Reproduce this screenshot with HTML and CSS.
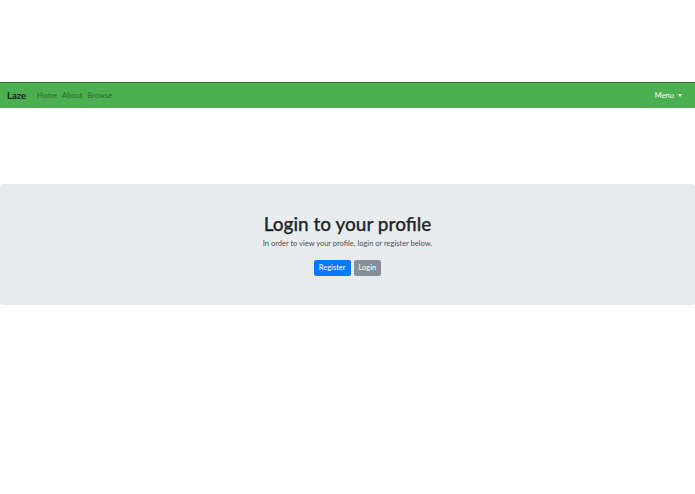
FILE: index.html
```html
<!DOCTYPE html>
<html lang="en">
<head>
<meta charset="utf-8">
<title>Laze</title>
<link rel="stylesheet" href="styles.css">
</head>
<body>
<div class="top-space"></div>
<nav class="navbar">
  <a class="brand" href="#">Laze</a>
  <ul class="nav-links">
    <li><a href="#">Home</a></li>
    <li><a href="#">About</a></li>
    <li><a href="#">Browse</a></li>
  </ul>
  <a class="menu" href="#">Menu <span class="caret"></span></a>
</nav>
<div class="gap"></div>
<section class="jumbotron">
  <h1 class="title">Login to your profile</h1>
  <p class="lead">In order to view your profile, login or register below.</p>
  <div class="actions">
    <a class="btn btn-primary" href="#">Register</a>
    <a class="btn btn-secondary" href="#">Login</a>
  </div>
</section>
</body>
</html>
```
FILE: styles.css
```css
html, body {
  margin: 0;
  padding: 0;
  background: #fff;
  font-family: "Lato", "Open Sans", sans-serif;
  color: #212529;
}
.top-space {
  height: 82px;
}
.navbar {
  display: flex;
  align-items: center;
  height: 25px;
  background: #4caf50;
  border-top: 1px solid #2e6b31;
  padding: 0 8px 0 7px;
  font-size: 7.5px;
  line-height: 10px;
}
.brand {
  font-size: 9.5px;
  font-weight: 700;
  color: #1a1a1a;
  text-decoration: none;
  margin-right: 11px;
}
.nav-links {
  display: flex;
  align-items: center;
  list-style: none;
  margin: 0;
  padding: 0;
  gap: 5px;
  flex: 1;
  font-size: 7.5px;
}
.nav-links a {
  color: #2a6a2c;
  text-decoration: none;
}
.menu {
  font-size: 7.5px;
  color: #fff;
  text-decoration: none;
  display: flex;
  align-items: center;
  gap: 4px;
  margin-right: 5px;
}
.caret {
  width: 0;
  height: 0;
  border-left: 2.5px solid transparent;
  border-right: 2.5px solid transparent;
  border-top: 3px solid #fff;
}
.gap {
  height: 76px;
}
.jumbotron {
  background: #e9ecef;
  border-radius: 3px;
  height: 121px;
  box-sizing: border-box;
  padding-top: 27px;
  text-align: center;
}
.title {
  margin: 0;
  font-size: 19px;
  font-weight: 500;
  line-height: 26px;
  color: #212529;
  -webkit-text-stroke: 0.25px #212529;
}
.lead {
  margin: 2px 0 0;
  font-size: 7.5px;
  line-height: 10px;
  color: #495057;
}
.actions {
  display: flex;
  justify-content: center;
  gap: 3px;
  margin-top: 11px;
}
.btn {
  display: inline-block;
  font-size: 7.5px;
  line-height: 16px;
  padding: 0 5px;
  border-radius: 2px;
  color: #fff;
  text-decoration: none;
}
.btn-primary {
  background: #007bff;
}
.btn-secondary {
  background: #868e96;
}
```
